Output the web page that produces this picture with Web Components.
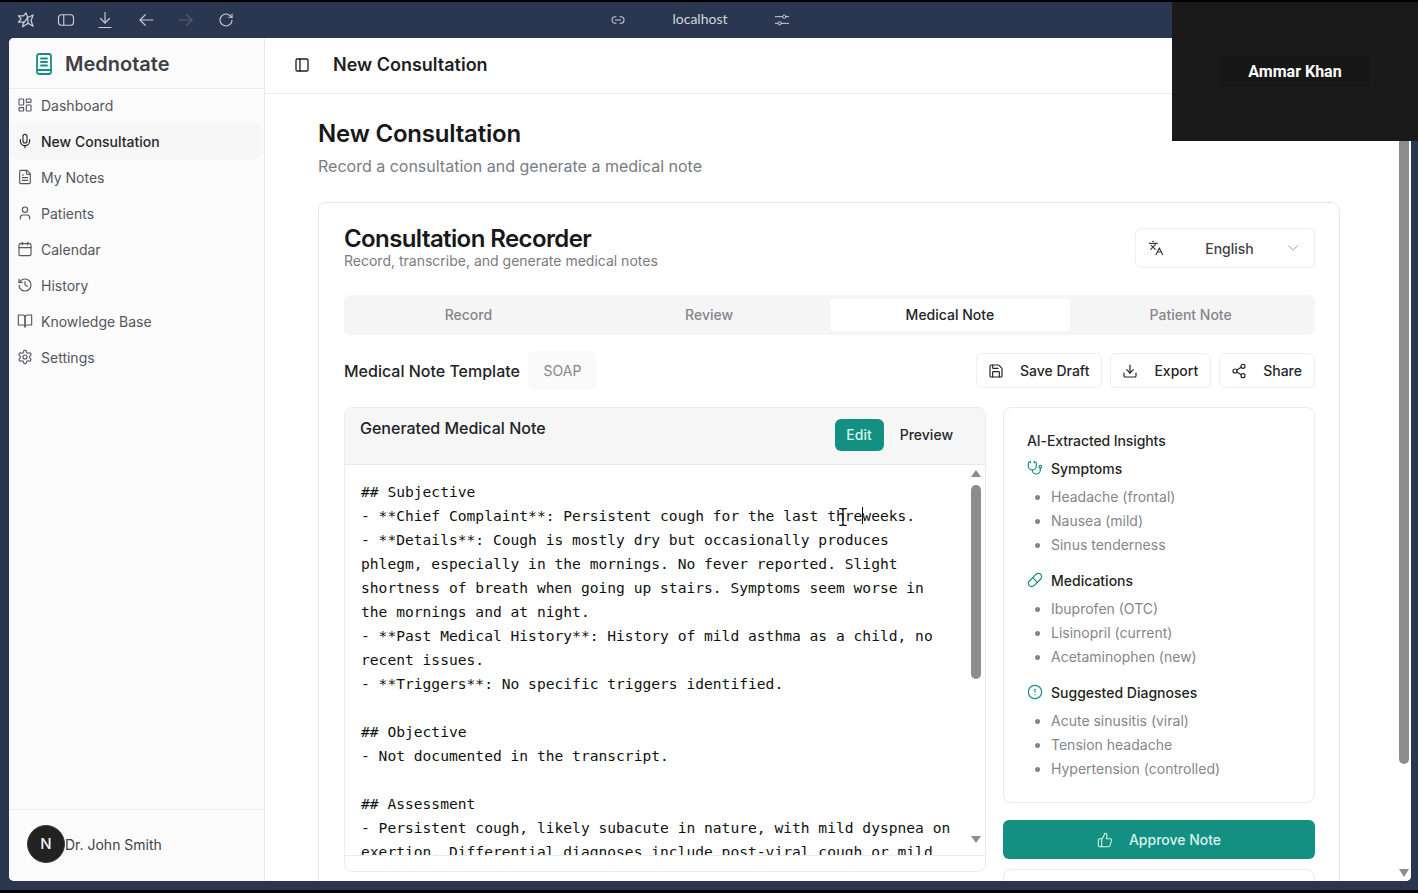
<!DOCTYPE html>
<html lang="en">
<head>
<meta charset="utf-8">
<title>Mednotate</title>
<style>
  html, body { margin: 0; height: 100%; background: #000; overflow: hidden; }
  body { font-family: Inter, "Liberation Sans", sans-serif; }
</style>
</head>
<body>
<app-shell></app-shell>
<script>
const ICONS = {
  panel: '<rect x="3" y="3" width="18" height="18" rx="2"/><path d="M9 3v18"/>',
  browserPanel: '<rect x="2" y="5" width="20" height="14" rx="4"/><path d="M9 5v14"/>',
  arc: '<path d="M12 3.5 14 9l6.5-3-2.5 7 2.5 6.5-6-3.5-6.5 4 1-5.5H3l3-4-3-3.5h6Z"/><path d="M9.5 15 14 9"/><path d="m14 9 .5 7.5"/>',
  downloadBar: '<path d="M12 2v14"/><path d="m6 10 6 6 6-6"/><path d="M4 22h16"/>',
  arrowLeft: '<path d="m11 5-7 7 7 7"/><path d="M4 12h17"/>',
  arrowRight: '<path d="m13 5 7 7-7 7"/><path d="M3 12h17"/>',
  reload: '<path d="M21 12a9 9 0 1 1-9-9c2.52 0 4.93 1 6.74 2.74L21 8"/><path d="M21 3v5h-5"/>',
  link: '<path d="M9 17H8A5 5 0 0 1 8 7h1"/><path d="M15 7h1a5 5 0 1 1 0 10h-1"/><path d="M8 12h8"/>',
  sliders: '<path d="M2 7h11"/><circle cx="15.5" cy="7" r="2.5"/><path d="M18 7h4"/><path d="M2 17h4"/><circle cx="8.5" cy="17" r="2.5"/><path d="M11 17h11"/>',
  logo: '<rect x="5" y="2" width="14" height="20" rx="2"/><path d="M9 6.5h6"/><path d="M9 10h6"/><path d="M9 13.5h6"/><path d="M5 18h14"/>',
  dashboard: '<rect x="3" y="3" width="7" height="9" rx="1"/><rect x="14" y="3" width="7" height="5" rx="1"/><rect x="14" y="12" width="7" height="9" rx="1"/><rect x="3" y="16" width="7" height="5" rx="1"/>',
  mic: '<path d="M12 2a3 3 0 0 0-3 3v7a3 3 0 0 0 6 0V5a3 3 0 0 0-3-3Z"/><path d="M19 10v2a7 7 0 0 1-14 0v-2"/><path d="M12 19v3"/>',
  file: '<path d="M15 2H6a2 2 0 0 0-2 2v16a2 2 0 0 0 2 2h12a2 2 0 0 0 2-2V7Z"/><path d="M14 2v4a2 2 0 0 0 2 2h4"/><path d="M10 9H8"/><path d="M16 13H8"/><path d="M16 17H8"/>',
  user: '<path d="M19 21v-2a4 4 0 0 0-4-4H9a4 4 0 0 0-4 4v2"/><circle cx="12" cy="7" r="4"/>',
  calendar: '<path d="M8 2v4"/><path d="M16 2v4"/><rect x="3" y="4" width="18" height="18" rx="2"/><path d="M3 10h18"/>',
  history: '<path d="M3 12a9 9 0 1 0 9-9 9.75 9.75 0 0 0-6.74 2.74L3 8"/><path d="M3 3v5h5"/><path d="M12 7v5l4 2"/>',
  book: '<path d="M2 3h6a4 4 0 0 1 4 4v14a3 3 0 0 0-3-3H2z"/><path d="M22 3h-6a4 4 0 0 0-4 4v14a3 3 0 0 1 3-3h7z"/>',
  settings: '<path d="M12.22 2h-.44a2 2 0 0 0-2 2v.18a2 2 0 0 1-1 1.73l-.43.25a2 2 0 0 1-2 0l-.15-.08a2 2 0 0 0-2.73.73l-.22.38a2 2 0 0 0 .73 2.73l.15.1a2 2 0 0 1 1 1.72v.51a2 2 0 0 1-1 1.74l-.15.09a2 2 0 0 0-.73 2.73l.22.38a2 2 0 0 0 2.73.73l.15-.08a2 2 0 0 1 2 0l.43.25a2 2 0 0 1 1 1.73V20a2 2 0 0 0 2 2h.44a2 2 0 0 0 2-2v-.18a2 2 0 0 1 1-1.73l.43-.25a2 2 0 0 1 2 0l.15.08a2 2 0 0 0 2.73-.73l.22-.39a2 2 0 0 0-.73-2.73l-.15-.08a2 2 0 0 1-1-1.74v-.5a2 2 0 0 1 1-1.74l.15-.09a2 2 0 0 0 .73-2.73l-.22-.38a2 2 0 0 0-2.73-.73l-.15.08a2 2 0 0 1-2 0l-.43-.25a2 2 0 0 1-1-1.73V4a2 2 0 0 0-2-2z"/><circle cx="12" cy="12" r="3"/>',
  languages: '<path d="m5 8 6 6"/><path d="m4 14 6-6 2-3"/><path d="M2 5h12"/><path d="M7 2h1"/><path d="m22 22-5-10-5 10"/><path d="M14 18h6"/>',
  chevron: '<path d="m6 9 6 6 6-6"/>',
  save: '<path d="M15.2 3a2 2 0 0 1 1.4.6l3.8 3.8a2 2 0 0 1 .6 1.4V19a2 2 0 0 1-2 2H5a2 2 0 0 1-2-2V5a2 2 0 0 1 2-2z"/><path d="M17 21v-7a1 1 0 0 0-1-1H8a1 1 0 0 0-1 1v7"/><path d="M7 3v4a1 1 0 0 0 1 1h7"/>',
  download: '<path d="M21 15v4a2 2 0 0 1-2 2H5a2 2 0 0 1-2-2v-4"/><path d="m7 10 5 5 5-5"/><path d="M12 15V3"/>',
  share: '<circle cx="18" cy="5" r="3"/><circle cx="6" cy="12" r="3"/><circle cx="18" cy="19" r="3"/><path d="m8.59 13.51 6.83 3.98"/><path d="m15.41 6.51-6.82 3.98"/>',
  stethoscope: '<path d="M11 2v2"/><path d="M5 2v2"/><path d="M5 3H4a2 2 0 0 0-2 2v4a6 6 0 0 0 12 0V5a2 2 0 0 0-2-2h-1"/><path d="M8 15a6 6 0 0 0 12 0v-3"/><circle cx="20" cy="10" r="2"/>',
  pill: '<path d="m10.5 20.5 10-10a4.95 4.95 0 1 0-7-7l-10 10a4.95 4.95 0 1 0 7 7Z"/><path d="m8.5 8.5 7 7"/>',
  alert: '<circle cx="12" cy="12" r="10"/><path d="M12 8v4"/><path d="M12 16h.01"/>',
  thumb: '<path d="M7 10v12"/><path d="M15 5.88 14 10h5.83a2 2 0 0 1 1.92 2.56l-2.33 8A2 2 0 0 1 17.5 22H4a2 2 0 0 1-2-2v-8a2 2 0 0 1 2-2h2.76a2 2 0 0 0 1.79-1.11L12 2a3.13 3.13 0 0 1 3 3.88Z"/>',
  ibeam: '<path d="M8 2h3l1 1 1-1h3"/><path d="M12 3v18"/><path d="M8 22h3l1-1 1 1h3"/>'
};

class MnIcon extends HTMLElement {
  connectedCallback() {
    const size = this.getAttribute("size") || 16;
    const stroke = this.getAttribute("stroke") || 2;
    this.attachShadow({ mode: "open" }).innerHTML = `
      <style>
        :host { display: inline-flex; flex: none; width: ${size}px; height: ${size}px; }
        svg { display: block; width: 100%; height: 100%; fill: none; stroke: currentColor;
              stroke-width: ${stroke}; stroke-linecap: round; stroke-linejoin: round; }
      </style>
      <svg viewBox="0 0 24 24">${ICONS[this.getAttribute("name")] || ""}</svg>`;
  }
}

// one base class so every element below just declares its template
class Shadowed extends HTMLElement {
  static html = "";
  constructor() {
    super();
    this.attachShadow({ mode: "open" }).innerHTML = this.constructor.html;
  }
}

class BrowserBar extends Shadowed {
  static html = `
    <style>
      :host { display: flex; align-items: center; height: 36px; flex: none; color: #c9ced8;
              font-family: Lato, "Liberation Sans", sans-serif; }
      .left { display: flex; align-items: center; gap: 21px; padding-left: 16px; width: 220px; }
      .left mn-icon:nth-child(4) { margin-left: 2px; }
      .left mn-icon:nth-child(5) { margin-left: 1px; color: #566079; }
      .left mn-icon:nth-child(6) { margin-left: 2px; }
      .mid { display: flex; align-items: center; margin-left: 374px; }
      .url { width: 148px; text-align: center; font-size: 14px; line-height: 16px; padding-bottom: 2px; color: #d3d7df; }
    </style>
    <div class="left">
      <mn-icon name="arc" size="20" stroke="1.5"></mn-icon>
      <mn-icon name="browserPanel" size="18" stroke="1.5"></mn-icon>
      <mn-icon name="downloadBar" size="18" stroke="1.5"></mn-icon>
      <mn-icon name="arrowLeft" size="18" stroke="1.5"></mn-icon>
      <mn-icon name="arrowRight" size="18" stroke="1.5"></mn-icon>
      <mn-icon name="reload" size="16" stroke="1.6"></mn-icon>
    </div>
    <div class="mid">
      <mn-icon name="link" size="16" stroke="1.6"></mn-icon>
      <span class="url">localhost</span>
      <mn-icon name="sliders" size="16" stroke="1.5"></mn-icon>
    </div>`;
}

class CallTile extends Shadowed {
  static html = `
    <style>
      :host { position: absolute; left: 1172px; top: 2px; width: 246px; height: 139px; background: #1a1a1a;
              display: flex; align-items: center; justify-content: center; box-sizing: border-box; z-index: 5; }
      span { color: #fff; font: 700 16px Roboto, "Liberation Sans", sans-serif; padding: 5px 28px;
             background: #171717; }
    </style>
    <span><slot></slot></span>`;
}

class NavItem extends Shadowed {
  static html = `
    <style>
      :host { display: flex; align-items: center; gap: 8px; height: 36px; padding-left: 8px; margin-right: 3px;
              font-size: 14px; color: #55555e; border-radius: 6px; }
      :host([active]) { color: #27272a; font-weight: 500; background: #f7f7f7; }
    </style>
    <slot name="icon"></slot><slot></slot>`;
}

class MnSidebar extends Shadowed {
  static html = `
    <style>
      :host { display: flex; flex-direction: column; flex: none; width: 256px; box-sizing: border-box;
              background: #fbfbfb; border-right: 1px solid #e8e8e8; }
      .brand { display: flex; align-items: center; gap: 9px; height: 51px; flex: none; box-sizing: border-box;
               padding: 1px 0 0 23px; border-bottom: 1px solid #ececec; font-size: 20px; font-weight: 600; color: #3f3f46; }
      .brand mn-icon { color: #149082; }
      nav { flex: 1; margin-top: -2px; }
      footer { display: flex; align-items: center; height: 72px; flex: none; box-sizing: border-box;
               padding: 0 0 2px 18px; border-top: 1px solid #ececec; font-size: 14px; color: #3f3f46; }
      .dev { width: 38px; height: 38px; flex: none; border-radius: 50%; box-sizing: border-box; background: #222;
             border: 1px solid #3c3c3c; color: #f4f4f4; font-size: 15px; font-weight: 500;
             display: flex; align-items: center; justify-content: center; position: relative; top: -1px; }
    </style>
    <div class="brand"><mn-icon name="logo" size="24" stroke="1.8"></mn-icon>Mednotate</div>
    <nav>
      <nav-item><mn-icon slot="icon" name="dashboard" stroke="1.7"></mn-icon>Dashboard</nav-item>
      <nav-item active><mn-icon slot="icon" name="mic" stroke="1.7"></mn-icon>New Consultation</nav-item>
      <nav-item><mn-icon slot="icon" name="file" stroke="1.7"></mn-icon>My Notes</nav-item>
      <nav-item><mn-icon slot="icon" name="user" stroke="1.7"></mn-icon>Patients</nav-item>
      <nav-item><mn-icon slot="icon" name="calendar" stroke="1.7"></mn-icon>Calendar</nav-item>
      <nav-item><mn-icon slot="icon" name="history" stroke="1.7"></mn-icon>History</nav-item>
      <nav-item><mn-icon slot="icon" name="book" stroke="1.7"></mn-icon>Knowledge Base</nav-item>
      <nav-item><mn-icon slot="icon" name="settings" stroke="1.7"></mn-icon>Settings</nav-item>
    </nav>
    <footer><div class="dev">N</div><span>Dr. John Smith</span></footer>`;
}

class OutlineButton extends Shadowed {
  static html = `
    <style>
      :host { display: inline-flex; align-items: center; gap: 16px; height: 35px; box-sizing: border-box; padding: 0 12px 0 11px;
              border: 1px solid #eeeeee; border-radius: 6px; background: #fff; font-size: 14px; font-weight: 500; color: #27272a; }
    </style>
    <slot name="icon"></slot><slot></slot>`;
}

class MnTabs extends Shadowed {
  static html = `
    <style>
      :host { display: grid; grid-template-columns: repeat(4, 1fr); height: 40px; box-sizing: border-box; padding: 4px;
              background: #f5f5f5; border-radius: 6px; margin-top: 24px; font-size: 14px; font-weight: 500; color: #85858c; }
      div { display: flex; align-items: center; justify-content: center; border-radius: 4px; padding-bottom: 1px; }
      .on { background: #fff; color: #232326; }
    </style>
    <div>Record</div><div>Review</div><div class="on">Medical Note</div><div>Patient Note</div>`;
}

class NoteEditor extends Shadowed {
  static html = `
    <style>
      :host { display: flex; flex-direction: column; height: 465px; box-sizing: border-box; border: 1px solid #ececec; border-radius: 8px; overflow: hidden; background: #fff; }
      header { display: flex; justify-content: space-between; height: 57px; flex: none; box-sizing: border-box;
               padding: 9px 17px 0 15px; background: #f6f6f7; border-bottom: 1px solid #e8e8e8; }
      h3 { margin: 0; font-size: 16px; line-height: 22px; font-weight: 500; color: #232326; }
      .modes { display: flex; align-items: flex-start; font-size: 14px; font-weight: 500; color: #27272a; margin-top: 2px; }
      .modes span { display: flex; align-items: center; height: 32px; padding: 0 16px; border-radius: 6px; padding-bottom: 1px; box-sizing: border-box; }
      .modes .on { background: #149082; color: #d8f3ee; padding: 0 12px 1px 11.5px; }
      .modes span:last-child { padding-right: 15px; }
      .body { display: flex; height: 390px; flex: none; border-bottom: 1px solid #ececec; overflow: hidden; }
      pre { flex: 1; margin: 0; padding: 15px 0 0 16px; font: 14.62px/24px "DejaVu Sans Mono", "Liberation Mono", monospace; color: #111; position: relative; overflow: hidden; }
      .caret { display: inline-block; width: 1px; height: 17px; background: #111; margin-right: -1px; vertical-align: -3px; }
      .ibeam { position: absolute; left: 488px; top: 42px; color: #111; }
      .bar { width: 14px; margin-right: 2px; flex: none; display: flex; flex-direction: column; align-items: center; }
      .up, .down { width: 0; height: 0; border-left: 5.5px solid transparent; border-right: 5.5px solid transparent; flex: none; }
      .up { border-bottom: 7px solid #8d8d8d; margin-top: 5px; }
      .down { border-top: 7px solid #8d8d8d; margin-top: 157px; }
      .thumb { width: 10px; height: 194px; border-radius: 5px; background: #8d8d8d; margin-top: 8px; flex: none; }
    </style>
    <header>
      <h3><slot name="title"></slot></h3>
      <div class="modes"><span class="on">Edit</span><span>Preview</span></div>
    </header>
    <div class="body">
      <pre><div><slot name="first"></slot></div><div><slot name="before"></slot><i class="caret"></i><slot name="after"></slot></div><div><slot name="rest"></slot></div><mn-icon class="ibeam" name="ibeam" size="20" stroke="1.6"></mn-icon></pre>
      <div class="bar"><i class="up"></i><i class="thumb"></i><i class="down"></i></div>
    </div>`;
}

class InsightGroup extends Shadowed {
  static html = `
    <style>
      :host { display: block; margin-top: 13px; }
      :host(:first-of-type) { margin-top: 7px; }
      .head { display: flex; align-items: center; gap: 8px; height: 20px; font-size: 14px; font-weight: 500; color: #1f1f23; }
      .head ::slotted(mn-icon) { color: #149082; }
      ul { margin: 7px 0 0; padding: 0 0 0 24px; font-size: 14px; line-height: 24px; color: #85858c; }
      ::slotted(li) { display: list-item; }
    </style>
    <div class="head"><slot name="icon"></slot><slot name="title"></slot></div>
    <ul><slot></slot></ul>`;
}

class InsightsPanel extends Shadowed {
  static html = `
    <style>
      :host { display: block; box-sizing: border-box; height: 396px; padding: 23px 23px 0; border: 1px solid #ececec; border-radius: 8px; background: #fff; }
      h4 { margin: 0; font-size: 14px; line-height: 20px; font-weight: 500; color: #27272a; letter-spacing: -.1px; }
    </style>
    <h4>AI-Extracted Insights</h4>
    <slot></slot>`;
}

class ConsultationPage extends Shadowed {
  static html = `
    <style>
      :host { display: flex; flex-direction: column; flex: 1; min-width: 0; background: #fff; }
      .top { display: flex; align-items: center; gap: 23px; height: 56px; flex: none; box-sizing: border-box; padding: 0 0 2px 29px;
             border-bottom: 1px solid #ebebeb; font-size: 18px; font-weight: 600; color: #1f1f23; }
      .scrollarea { display: flex; flex: 1; min-height: 0; overflow: hidden; }
      .content { flex: 1; min-width: 0; padding: 23px 57px 0 53px; overflow: hidden; }
      h1 { margin: 0; font-size: 24px; line-height: 33px; font-weight: 600; color: #18181b; letter-spacing: -.2px; }
      .lead { margin: 4px 0 0; font-size: 16px; line-height: 24px; color: #7b7b83; }
      .card { margin-top: 24px; box-sizing: border-box; border: 1px solid #e6e6e6; border-radius: 8px; padding: 24px 24px 0 25px; height: 700px; }
      .cardhead { display: flex; justify-content: space-between; }
      h2 { margin: 0; font-size: 24px; line-height: 24px; font-weight: 600; color: #18181b; letter-spacing: -.6px; }
      .cardhead p { margin: 0; font-size: 14px; line-height: 20px; color: #7b7b83; }
      .select { display: flex; align-items: center; justify-content: space-between; width: 180px; height: 40px; margin-top: 1px; box-sizing: border-box;
                padding: 0 12px; border: 1px solid #eeeeee; border-radius: 6px; font-size: 14px; font-weight: 500; color: #3f3f46; }
      .select span { margin-left: 11px; }
      .select mn-icon:last-child { color: #9a9aa0; }
      .toolbar { display: flex; align-items: center; justify-content: space-between; height: 35px; margin-top: 18px; }
      .tpl { display: flex; align-items: center; gap: 8px; font-size: 16px; font-weight: 500; color: #232326; }
      .chip { display: flex; align-items: center; justify-content: center; width: 69px; height: 39px; border-radius: 6px; background: #fafafa;
              font-size: 14px; font-weight: 400; color: #85858c; }
      .actions { display: flex; gap: 8px; }
      .grid { display: grid; grid-template-columns: 642px 312px; justify-content: space-between; margin-top: 19px; }
      .side { display: flex; flex-direction: column; }
      .approve { display: flex; align-items: center; justify-content: center; gap: 16px; height: 39px; margin-top: 17px; flex: none; border-radius: 6px;
                 background: #149082; color: #d8f3ee; font-size: 14px; font-weight: 500; }
      .more { height: 60px; margin-top: 10px; border: 1px solid #ececec; border-radius: 8px; }
      .track { width: 14px; flex: none; display: flex; flex-direction: column; align-items: center; position: relative; }
      .thumb { width: 10px; height: 670px; border-radius: 5px; background: #8d8d8d; flex: none; }
      .down { width: 0; height: 0; border-left: 5.5px solid transparent; border-right: 5.5px solid transparent; border-top: 8px solid #8d8d8d; margin-top: 105px; flex: none; }
    </style>
    <div class="top"><mn-icon name="panel" size="16"></mn-icon><span>New Consultation</span></div>
    <div class="scrollarea">
      <div class="content">
        <h1>New Consultation</h1>
        <p class="lead">Record a consultation and generate a medical note</p>
        <section class="card">
          <div class="cardhead">
            <div><h2>Consultation Recorder</h2><p>Record, transcribe, and generate medical notes</p></div>
            <div class="select"><mn-icon name="languages" size="16" stroke="1.8"></mn-icon><span>English</span><mn-icon name="chevron" size="18" stroke="1.3"></mn-icon></div>
          </div>
          <mn-tabs></mn-tabs>
          <div class="toolbar">
            <div class="tpl"><span>Medical Note Template</span><span class="chip">SOAP</span></div>
            <div class="actions">
              <outline-button><mn-icon slot="icon" name="save" stroke="1.8"></mn-icon>Save Draft</outline-button>
              <outline-button><mn-icon slot="icon" name="download" stroke="1.8"></mn-icon>Export</outline-button>
              <outline-button><mn-icon slot="icon" name="share" stroke="1.8"></mn-icon>Share</outline-button>
            </div>
          </div>
          <div class="grid">
            <note-editor>
              <span slot="title">Generated Medical Note</span>
              <span slot="first">## Subjective</span>
              <span slot="before">- **Chief Complaint**: Persistent cough for the last thre</span>
              <span slot="after">weeks.</span>
              <span slot="rest">- **Details**: Cough is mostly dry but occasionally produces
phlegm, especially in the mornings. No fever reported. Slight
shortness of breath when going up stairs. Symptoms seem worse in
the mornings and at night.
- **Past Medical History**: History of mild asthma as a child, no
recent issues.
- **Triggers**: No specific triggers identified.

## Objective
- Not documented in the transcript.

## Assessment
- Persistent cough, likely subacute in nature, with mild dyspnea on
exertion. Differential diagnoses include post-viral cough or mild</span>
            </note-editor>
            <div class="side">
              <insights-panel>
                <insight-group>
                  <mn-icon slot="icon" name="stethoscope" stroke="1.8"></mn-icon><span slot="title">Symptoms</span>
                  <li>Headache (frontal)</li><li>Nausea (mild)</li><li>Sinus tenderness</li>
                </insight-group>
                <insight-group>
                  <mn-icon slot="icon" name="pill" stroke="1.8"></mn-icon><span slot="title">Medications</span>
                  <li>Ibuprofen (OTC)</li><li>Lisinopril (current)</li><li>Acetaminophen (new)</li>
                </insight-group>
                <insight-group>
                  <mn-icon slot="icon" name="alert" stroke="1.8"></mn-icon><span slot="title">Suggested Diagnoses</span>
                  <li>Acute sinusitis (viral)</li><li>Tension headache</li><li>Hypertension (controlled)</li>
                </insight-group>
              </insights-panel>
              <div class="approve"><mn-icon name="thumb" stroke="1.6"></mn-icon><span>Approve Note</span></div>
              <div class="more"></div>
            </div>
          </div>
        </section>
      </div>
      <div class="track"><i class="thumb"></i><i class="down"></i></div>
    </div>`;
}

class AppShell extends Shadowed {
  static html = `
    <style>
      :host { display: flex; flex-direction: column; height: 893px; background: #000; position: relative; overflow: hidden; }
      .chrome { display: flex; flex-direction: column; flex: none; height: 888px; margin-top: 2px;
                background: #2b3650; }
      .window { display: flex; height: 843px; flex: none; margin: 0 7px 0 9px; border-radius: 5px; overflow: hidden; background: #fff; }
    </style>
    <div class="chrome">
      <browser-bar></browser-bar>
      <div class="window">
        <mn-sidebar></mn-sidebar>
        <consultation-page></consultation-page>
      </div>
    </div>
    <call-tile>Ammar Khan</call-tile>`;
}

customElements.define("mn-icon", MnIcon);
customElements.define("browser-bar", BrowserBar);
customElements.define("call-tile", CallTile);
customElements.define("nav-item", NavItem);
customElements.define("mn-sidebar", MnSidebar);
customElements.define("outline-button", OutlineButton);
customElements.define("mn-tabs", MnTabs);
customElements.define("note-editor", NoteEditor);
customElements.define("insight-group", InsightGroup);
customElements.define("insights-panel", InsightsPanel);
customElements.define("consultation-page", ConsultationPage);
customElements.define("app-shell", AppShell);
</script>
</body>
</html>
